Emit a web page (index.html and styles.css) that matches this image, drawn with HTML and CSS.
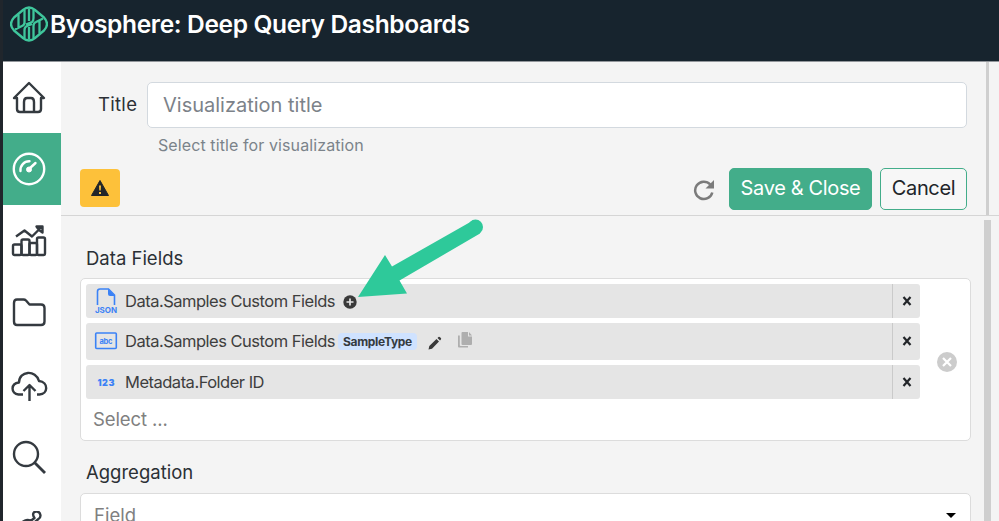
FILE: index.html
```html
<!DOCTYPE html>
<html lang="en">

<head>
    <meta charset="UTF-8">
    <meta name="viewport" content="width=device-width, initial-scale=1.0">
    <title>Byosphere: Deep Query Dashboards</title>
    <link rel="stylesheet" href="styles.css">
</head>

<body>
    <header class="topbar">
        <svg class="logo" width="38" height="36" viewBox="0 0 38 36" fill="none" stroke="#3fc69c" stroke-width="2.3" stroke-linejoin="round">
            <path d="M13 4Q19 -1 25 4L34 11.500Q40 18 34 24.500L25 32Q19 37 13 32L4 24.500Q-2 18 4 11.500Z" />
            <path d="M8.500 8.500V22M5 23.500L12 20Q14.500 19 14.500 16.500V4M16 18.500L22 16Q23.500 15 23.500 12V4M19 2.500V15M14.500 32V24Q14.500 21 17 20L22 18M19 21V33.500M23.500 32V20Q23.500 17 26 16L33 12.500M29.500 14V27.500" />
        </svg>
        <h1>Byosphere: Deep Query Dashboards</h1>
    </header>

    <div class="page">
        <nav class="sidebar">
            <a class="item">
                <svg width="36" height="36" viewBox="0 0 36 36">
                    <path d="M3 18L18 3L33 18H30V29Q30 32 27 32H9Q6 32 6 29V18ZM13 32V22Q13 18 16 18H20Q23 18 23 22V32" />
                </svg>
            </a>
            <a class="item active">
                <svg width="36" height="36" viewBox="0 0 36 36">
                    <circle cx="18" cy="18" r="15.200" />
                    <path d="M9.500 20A8.700 8.700 0 0 1 18.500 10.300M18 18L24.500 12" stroke-linecap="round" />
                    <circle cx="18" cy="18.500" r="2.500" fill="#fff" stroke-width="1" />
                </svg>
            </a>
            <a class="item">
                <svg width="36" height="36" viewBox="0 0 36 36">
                    <rect x="2" y="21.500" width="8.500" height="10.500" rx="1.500" />
                    <rect x="10.500" y="16.500" width="8" height="15.500" rx="1.500" />
                    <rect x="18.500" y="20" width="7.500" height="12" rx="1.500" />
                    <rect x="26" y="14.500" width="8" height="17.500" rx="1.500" />
                    <path d="M5 13.500L13.500 7.500L21 13.500L30 4.500M25.500 3.500H31.500V9.500L28 7Z" />
                </svg>
            </a>
            <a class="item">
                <svg width="36" height="36" viewBox="0 0 36 36">
                    <path d="M6 4.500H12.500Q14 4.500 15 5.500L18.500 9.500H30Q33.500 9.500 33.500 13V26.500Q33.500 30 30 30H6Q3 30 3 26.500V8Q3 4.500 6 4.500Z" />
                </svg>
            </a>
            <a class="item">
                <svg width="38" height="36" viewBox="0 0 38 36">
                    <path d="M13 27.500H8.500C.5 26.500 .5 16.500 9 15.500C9 3.500 26 2.500 29 14C39 15 38 27.500 29.500 27.500H27M19.500 34V18.500M13.500 24L19.500 18L25.500 24" />
                </svg>
            </a>
            <a class="item">
                <svg width="36" height="36" viewBox="0 0 36 36">
                    <circle cx="15" cy="15" r="12" />
                    <path d="M23.500 23.500L34 34" stroke-width="2.800" />
                </svg>
            </a>
            <a class="item">
                <svg width="36" height="36" viewBox="0 0 36 36">
                    <path d="M8 13L14 9.500Q17 8 19.500 10L23.500 7C20.500 3 23 0 26 .5C30 1 30.500 6.500 27.500 8L22 12.500" />
                </svg>
            </a>
        </nav>

        <main class="main">
            <section class="head">
                <div class="title-row">
                    <label for="title">Title</label>
                    <input id="title" type="text" placeholder="Visualization title">
                </div>
                <p class="hint">Select title for visualization</p>
                <div class="actions">
                    <button class="warn">
                        <svg width="18" height="16" viewBox="0 0 18 16">
                            <path d="M9 .5L17.500 15.500H.5Z" fill="#222629" stroke="#222629" stroke-linejoin="round" />
                            <path d="M8 5.500H10L9.700 10.500H8.300ZM8 12H10V14H8Z" fill="#fdc13a" />
                        </svg>
                    </button>
                    <svg class="reload" width="22" height="22" viewBox="0 0 22 22">
                        <path d="M17.200 5.400A8.700 8.700 0 1 0 19.300 13.500" fill="none" stroke="#7b7b7b" stroke-width="2.500" />
                        <path d="M21 1V9.500H12.500Z" fill="#7b7b7b" />
                    </svg>
                    <button class="btn save">Save &amp; Close</button>
                    <button class="btn cancel">Cancel</button>
                </div>
                <div class="thumb"></div>
            </section>

            <section class="body">
                <h2>Data Fields</h2>
                <div class="multi">
                    <div class="values">
                        <div class="chip">
                            <svg class="type" width="24" height="28" viewBox="0 0 24 28">
                                <path d="M3.500 18V4.500Q3.500 2 6 2H14.500L20.500 8V18" fill="none" stroke="#3b82f6" stroke-width="1.600" />
                                <path d="M14 2L21 9H16Q14 9 14 7Z" fill="#3b82f6" />
                                <text x="12" y="26" textLength="22" font-size="8">JSON</text>
                            </svg>
                            <span class="name">Data.Samples Custom Fields</span>
                            <svg class="plus" width="14" height="14" viewBox="0 0 14 14">
                                <circle cx="7" cy="7" r="6.700" fill="#3a3a3a" />
                                <path d="M7 3.500V10.500M3.500 7H10.500" stroke="#e5e5e5" stroke-width="1.700" />
                            </svg>
                            <span class="remove"><svg width="10" height="10" viewBox="0 0 10 10"><path d="M1.500 1L8.500 9M8.500 1L1.500 9" /></svg></span>
                        </div>
                        <div class="chip tall">
                            <svg class="type" width="24" height="20" viewBox="0 0 24 20">
                                <rect x="1.700" y="2" width="20.600" height="15.500" rx="1" fill="none" stroke="#3b82f6" stroke-width="1.600" />
                                <text x="12" y="12.500" textLength="13" font-size="7.500">abc</text>
                            </svg>
                            <span class="name">Data.Samples Custom Fields</span>
                            <span class="badge">SampleType</span>
                            <svg class="pencil" width="14" height="14" viewBox="0 0 14 14" fill="#3a3a3a">
                                <path d="M.5 13.500L1.300 10L8.500 3L11 5.500L4 12.700ZM9.500 2L10.500 1Q11.300.5 12 1.200L12.900 2.100Q13.500 2.900 12.900 3.600L12 4.500Z" />
                            </svg>
                            <svg class="copy" width="16" height="17" viewBox="0 0 16 17" fill="#aeaeae">
                                <path d="M5.500 0H11V4.500H15V12Q15 13 14 13H5.500Q4.500 13 4.500 12V1Q4.500 0 5.500 0ZM12 0L15 3.500H12Z" />
                                <path d="M1 3.500V14.500Q1 15.500 2 15.500H11V14H3.500Q2.800 14 2.800 13.300V3.500Z" />
                            </svg>
                            <span class="remove"><svg width="10" height="10" viewBox="0 0 10 10"><path d="M1.500 1L8.500 9M8.500 1L1.500 9" /></svg></span>
                        </div>
                        <div class="chip">
                            <svg class="type" width="24" height="20" viewBox="0 0 24 20">
                                <text class="digits" x="12" y="13.500" textLength="17" font-size="9">123</text>
                            </svg>
                            <span class="name">Metadata.Folder ID</span>
                            <span class="remove"><svg width="10" height="10" viewBox="0 0 10 10"><path d="M1.500 1L8.500 9M8.500 1L1.500 9" /></svg></span>
                        </div>
                        <div class="placeholder">Select ...</div>
                    </div>
                    <svg class="clear" width="22" height="22" viewBox="0 0 22 22">
                        <circle cx="11" cy="11" r="10" fill="#ccc" />
                        <path d="M7 7L15 15M15 7L7 15" stroke="#fff" stroke-width="2.200" />
                    </svg>
                </div>
                <h2 class="agg">Aggregation</h2>
                <div class="select">
                    <span>Field</span>
                    <svg width="10" height="5" viewBox="0 0 10 5"><path d="M0 0H10L5 5Z" /></svg>
                </div>
                <div class="thumb"></div>
            </section>
        </main>
    </div>

    <!-- pointer to the "add" icon of the first field -->
    <svg class="arrow" width="130" height="84" viewBox="0 0 130 84">
        <path d="M2 79L29 37L36 48.500L117 2.500L124 15.500L43.500 62.500L51 75.500Z" fill="#2ec99a" />
        <circle cx="119.500" cy="9" r="7.500" fill="#2ec99a" />
    </svg>
</body>

</html>
```
FILE: styles.css
```css
* {
    margin: 0;
    padding: 0;
    box-sizing: border-box;
}

body {
    position: relative;
    width: 999px;
    height: 521px;
    overflow: hidden;
    border-left: 3px solid #20262c;
    background: #f4f4f4;
    color: #2b3035;
    font-family: Inter, "Liberation Sans", sans-serif;
}

svg {
    display: block;
    flex: none;
}

.topbar {
    display: flex;
    align-items: flex-start;
    height: 62px;
    padding: 6px 0 0 7px;
    background: #17242e;
    border-bottom: 1px solid #92969b;
}

.topbar h1 {
    color: #fff;
    font-size: 24.5px;
    font-weight: 600;
    line-height: 36px;
    letter-spacing: -0.35px;
    white-space: nowrap;
    margin-left: 2px;
}

.page {
    display: flex;
    height: 459px;
}

.sidebar {
    flex: none;
    width: 58px;
    background: #fff;
    overflow: hidden;
}

.sidebar .item {
    display: flex;
    align-items: center;
    justify-content: center;
    height: 72px;
    padding-right: 6px;
}

.sidebar .item:first-child {
    height: 71px;
}

.sidebar svg {
    fill: none;
    stroke: #343a40;
    stroke-width: 2.4;
    stroke-linejoin: round;
}

.sidebar .active {
    background: #43ad8a;
}

.sidebar .active svg {
    stroke: #fff;
}

.main {
    flex: 1;
    min-width: 0;
}

.head {
    position: relative;
    height: 154px;
    padding: 20px 32px 0 19px;
    border-bottom: 1px solid #d5d5d5;
}

.title-row {
    display: flex;
    align-items: center;
}

.title-row label {
    width: 67px;
    padding: 0 0 2px 18px;
    font-size: 18.5px;
    letter-spacing: 0.3px;
}

.title-row input {
    width: 820px;
    height: 46px;
    padding: 0 15px;
    border: 1px solid #d3d9df;
    border-radius: 5px;
    font-family: inherit;
    font-size: 20px;
}

.title-row input::placeholder {
    color: #7c8289;
}

.hint {
    height: 40px;
    padding: 8px 0 0 78px;
    color: #7b838a;
    font-size: 16px;
    line-height: 19px;
    letter-spacing: 0.1px;
}

.actions {
    display: flex;
    align-items: center;
}

button {
    font-family: inherit;
}

.warn {
    display: flex;
    align-items: center;
    justify-content: center;
    width: 40px;
    height: 38px;
    margin: -3px auto 0 0;
    border: none;
    border-radius: 4px;
    background: #fdc13a;
}

.reload {
    margin: 2px 14px 0 0;
}

.btn {
    height: 42px;
    padding-bottom: 2px;
    border: 1px solid #43ad8a;
    border-radius: 5px;
    font-size: 20px;
    letter-spacing: -0.35px;
    white-space: nowrap;
}

.save {
    width: 143px;
    margin-right: 8px;
    background: #43ad8a;
    color: #fff;
}

.cancel {
    width: 87px;
    background: #f7f7f7;
    color: #212529;
}

.thumb {
    position: absolute;
    background: #cfcfcf;
}

.head .thumb {
    top: 0;
    right: 10px;
    width: 3px;
    height: 153px;
}

.body {
    position: relative;
    height: 305px;
    padding: 30px 28px 0 19px;
    overflow: hidden;
}

.body .thumb {
    top: 4px;
    right: 8px;
    width: 7px;
    height: 301px;
}

h2 {
    padding-left: 6px;
    font-size: 18.5px;
    font-weight: 400;
    line-height: 24px;
    white-space: nowrap;
}

.multi {
    display: flex;
    align-items: center;
    height: 163px;
    margin-top: 8px;
    padding: 2px 12px 0 5px;
    border: 1px solid #dcdcdc;
    border-radius: 5px;
    background: #fff;
}

.values {
    flex: none;
    width: 834px;
    margin-right: auto;
}

.chip {
    display: flex;
    align-items: center;
    height: 34px;
    margin-bottom: 5px;
    padding-left: 8px;
    border-radius: 3px;
    background: #e5e5e5;
    font-size: 16.5px;
    letter-spacing: -0.5px;
    white-space: nowrap;
}

.chip.tall {
    height: 37px;
}

.chip text {
    fill: #3b82f6;
    font-weight: 700;
    letter-spacing: 0;
    text-anchor: middle;
}

.chip .digits {
    font-weight: 900;
}

.name {
    margin-left: 7px;
    color: #3e3e3e;
}

.plus {
    margin: 2px 0 0 8px;
}

.badge {
    margin-left: 3px;
    padding: 0 5px;
    border-radius: 4px;
    background: #cfe2ff;
    color: #343a40;
    font-size: 12px;
    font-weight: 700;
    line-height: 17px;
    letter-spacing: -0.3px;
}

.pencil {
    margin: 3px 0 0 11px;
}

.copy {
    margin: -2px 0 0 15px;
}

.remove {
    display: flex;
    align-self: stretch;
    align-items: center;
    justify-content: center;
    width: 28px;
    margin-left: auto;
    border-left: 1px solid #cacaca;
}

.remove path {
    stroke: #222529;
    stroke-width: 2.2;
}

.placeholder {
    height: 34px;
    padding-left: 7px;
    color: #808080;
    font-size: 18.5px;
    line-height: 31px;
    letter-spacing: -0.1px;
}

.clear {
    margin-top: 3px;
}

.agg {
    margin-top: 19px;
}

.select {
    display: flex;
    align-items: center;
    justify-content: space-between;
    height: 46px;
    margin-top: 9px;
    padding: 0 14px 2px 13px;
    border: 1px solid #dcdcdc;
    border-radius: 5px;
    background: #fff;
    color: #808080;
    font-size: 18.5px;
}

.arrow {
    position: absolute;
    top: 218px;
    left: 353px;
}
```
